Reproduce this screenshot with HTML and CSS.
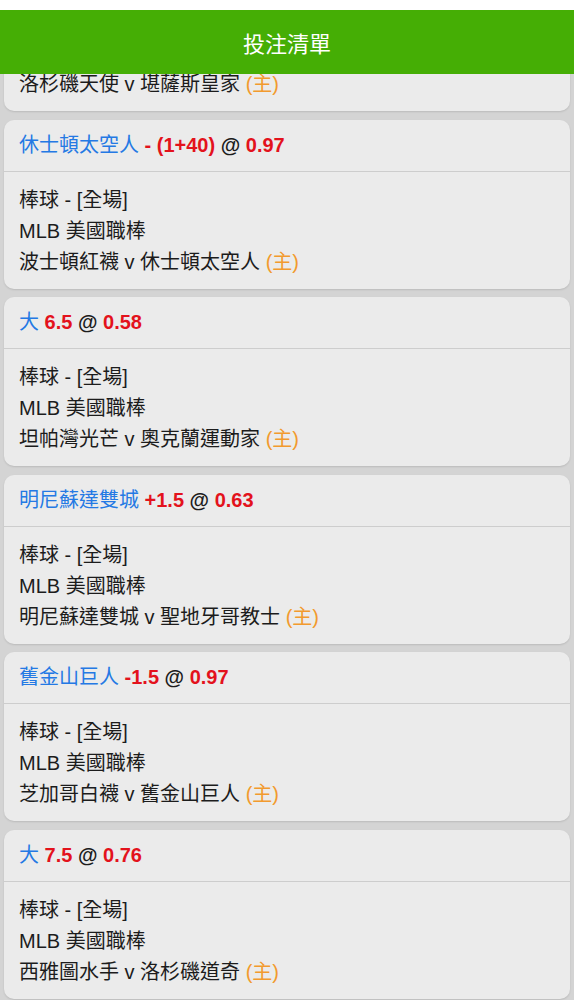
FILE: index.html
```html
<!DOCTYPE html>
<html lang="zh-Hant">
<head>
    <meta charset="UTF-8">
    <meta name="viewport" content="width=device-width, initial-scale=1.0">
    <title>投注清單</title>
    <link rel="stylesheet" href="styles.css">
</head>
<body>
    <div class="topbar">
        <div class="title">投注清單</div>
    </div>

    <div class="bet-list">
        <div class="card">
            <div class="card-head">
                <span class="pick">洛杉磯天使</span> <span class="odds">+1.5</span> <span class="at">@</span> <span class="odds">0.88</span>
            </div>
            <div class="card-body">
                <p>棒球 - [全場]</p>
                <p>MLB 美國職棒</p>
                <p>洛杉磯天使 v 堪薩斯皇家 <span class="home">(主)</span></p>
            </div>
        </div>

        <div class="card">
            <div class="card-head">
                <span class="pick">休士頓太空人</span> <span class="odds">- (1+40)</span> <span class="at">@</span> <span class="odds">0.97</span>
            </div>
            <div class="card-body">
                <p>棒球 - [全場]</p>
                <p>MLB 美國職棒</p>
                <p>波士頓紅襪 v 休士頓太空人 <span class="home">(主)</span></p>
            </div>
        </div>

        <div class="card">
            <div class="card-head">
                <span class="pick">大</span> <span class="odds">6.5</span> <span class="at">@</span> <span class="odds">0.58</span>
            </div>
            <div class="card-body">
                <p>棒球 - [全場]</p>
                <p>MLB 美國職棒</p>
                <p>坦帕灣光芒 v 奧克蘭運動家 <span class="home">(主)</span></p>
            </div>
        </div>

        <div class="card">
            <div class="card-head">
                <span class="pick">明尼蘇達雙城</span> <span class="odds">+1.5</span> <span class="at">@</span> <span class="odds">0.63</span>
            </div>
            <div class="card-body">
                <p>棒球 - [全場]</p>
                <p>MLB 美國職棒</p>
                <p>明尼蘇達雙城 v 聖地牙哥教士 <span class="home">(主)</span></p>
            </div>
        </div>

        <div class="card">
            <div class="card-head">
                <span class="pick">舊金山巨人</span> <span class="odds">-1.5</span> <span class="at">@</span> <span class="odds">0.97</span>
            </div>
            <div class="card-body">
                <p>棒球 - [全場]</p>
                <p>MLB 美國職棒</p>
                <p>芝加哥白襪 v 舊金山巨人 <span class="home">(主)</span></p>
            </div>
        </div>

        <div class="card">
            <div class="card-head">
                <span class="pick">大</span> <span class="odds">7.5</span> <span class="at">@</span> <span class="odds">0.76</span>
            </div>
            <div class="card-body">
                <p>棒球 - [全場]</p>
                <p>MLB 美國職棒</p>
                <p>西雅圖水手 v 洛杉磯道奇 <span class="home">(主)</span></p>
            </div>
        </div>
    </div>
</body>
</html>
```

FILE: styles.css
```css
* {
    padding: 0;
    margin: 0;
    box-sizing: border-box;
}

body {
    background-color: #d4d4d4;
    font-family: 'Liberation Sans', 'Noto Sans CJK TC', sans-serif;
    color: #1c1c1c;
    font-size: 20px;
}

/* fixed header, the list scrolls under it */
.topbar {
    position: fixed;
    top: 0;
    left: 0;
    right: 0;
    z-index: 10;
    background-color: #ffffff;
    padding-top: 10px;
}

.title {
    height: 64px;
    background-color: #45ae05;
    color: #ffffff;
    font-family: 'Noto Sans CJK TC', sans-serif;
    font-size: 22px;
    display: flex;
    justify-content: center;
    align-items: center;
}

/* list is shown scrolled down, first card is half under the header */
.bet-list {
    margin-top: -58px;
    display: flex;
    flex-direction: column;
    gap: 8.5px;
    padding: 0 4px 8px;
}

.card {
    background-color: #ebebeb;
    border-radius: 10px;
    box-shadow: 0 1px 2px rgba(0, 0, 0, 0.12);
}

.card-head {
    padding: 12px 15px;
    line-height: 27px;
    border-bottom: 1px solid #cdcdcd;
}

.pick {
    color: #2479e4;
}

.odds {
    color: #e3121c;
    font-weight: bold;
}

.at {
    color: #1c1c1c;
    font-weight: bold;
}

.card-body {
    padding: 13px 15px 11px;
    line-height: 31px;
}

.home {
    color: #f29a2e;
}
```
